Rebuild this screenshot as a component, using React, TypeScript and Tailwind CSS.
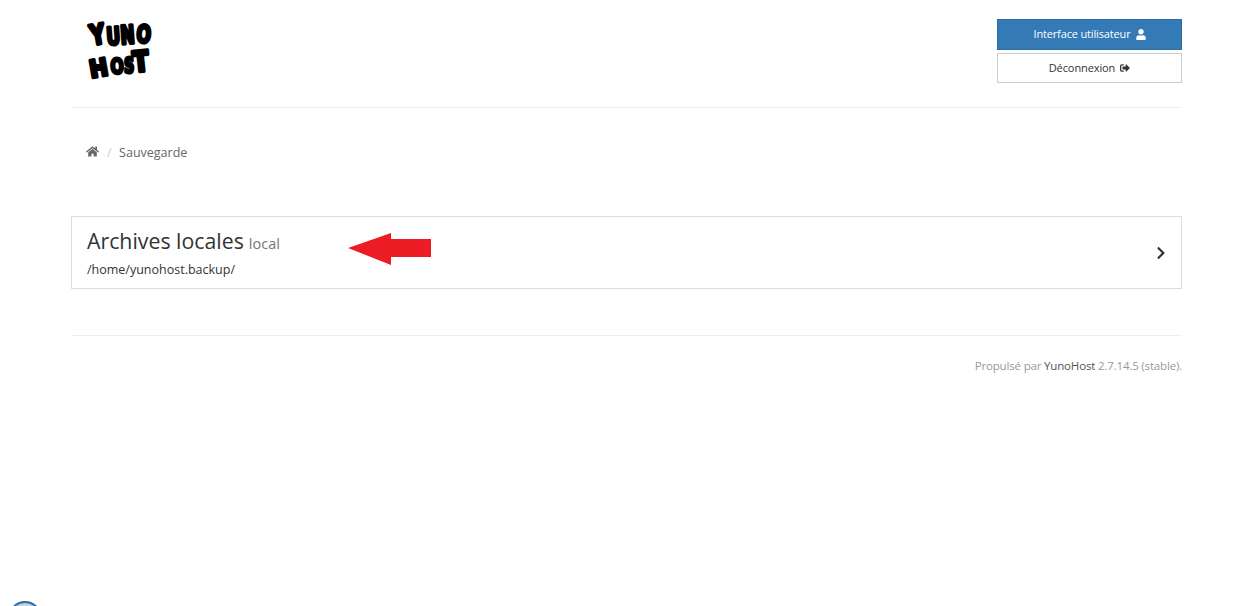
import { FaHome, FaUser, FaSignOutAlt, FaChevronRight } from "react-icons/fa";

const font = { fontFamily: '"Open Sans", sans-serif' };

function Logo() {
  const letters: [string, number, number, number, number, number][] = [
    ["Y", 3, 26, -10, 1.0, 1.35],
    ["U", 18, 26, -4, 0.85, 1.2],
    ["N", 32, 25, -4, 0.85, 1.25],
    ["O", 47, 23, 4, 0.85, 1.2],
    ["H", 2, 59, -10, 1.1, 1.2],
    ["O", 22, 55, -4, 0.78, 1.05],
    ["S", 35, 54, 0, 0.72, 1.05],
    ["T", 45, 53, -6, 1.15, 1.4],
  ];
  return (
    <svg width="70" height="62" viewBox="0 0 70 62" className="block overflow-visible">
      {letters.map(([c, x, y, r, sx, sy], i) => (
        <text
          key={i}
          transform={`translate(${x} ${y}) rotate(${r}) scale(${sx} ${sy})`}
          fontFamily="'DejaVu Sans', sans-serif"
          fontWeight="700"
          fontSize="20"
          fill="#000"
          stroke="#000"
          strokeWidth="2.8"
          strokeLinejoin="round"
        >
          {c}
        </text>
      ))}
    </svg>
  );
}

export default function App() {
  return (
    <div className="min-h-[606px] bg-white relative overflow-hidden text-[13px] text-[#555]" style={font}>
      <div className="w-[1111px] ml-[71px]">
        <header className="flex justify-between h-[108px] border-b border-[#eee]">
          <div className="pl-[18px] pt-[19px]">
            <Logo />
          </div>
          <div className="w-[185px] pt-[19px] flex flex-col gap-[3px]">
            <div className="h-[31px] bg-[#337ab7] border border-[#2e6da4] text-white text-[11px] tracking-[-0.15px] flex items-center justify-center gap-[5px]">
              Interface utilisateur <FaUser className="w-[10px] h-[11px]" />
            </div>
            <div className="h-[30px] bg-white border border-[#ccc] text-[#333] text-[11px] tracking-[-0.1px] flex items-center justify-center gap-[5px]">
              Déconnexion <FaSignOutAlt className="w-[10px] h-[10px]" />
            </div>
          </div>
        </header>
        <nav className="h-[108px] pl-[15px] pt-[36px] flex items-start gap-[8px] text-[12.5px] leading-[17px] text-[#666]">
          <FaHome className="w-[13px] h-[13px] mt-[1px] text-[#666]" />
          <span className="text-[#ccc]">/</span>
          <span className="-ml-[0.5px]">Sauvegarde</span>
        </nav>
        <div className="h-[73px] border border-[#ddd] flex items-center justify-between pl-[15px] pr-[15px]">
          <div>
            <div className="text-[#333] text-[21.3px] leading-[26px] flex items-baseline gap-[5px]">
              Archives locales <span className="text-[14.5px] text-[#777]">local</span>
            </div>
            <div className="text-[#333] text-[12.5px] leading-[17px] mt-[4px]">/home/yunohost.backup/</div>
          </div>
          <FaChevronRight className="w-[10px] h-[14px] text-[#333]" />
        </div>
        <div className="mt-[46px] border-t border-[#eee] pt-[22px] text-right text-[11.5px] tracking-[-0.17px] leading-[16px] text-[#999]">
          Propulsé par <span className="text-[#555]">YunoHost</span> 2.7.14.5 (stable).
        </div>
      </div>
      <svg width="85" height="34" viewBox="0 0 85 34" className="absolute left-[347px] top-[232px]">
        <polygon points="1,16 44,1 44,7 84,7 84,25 44,25 44,33" fill="#ed1c24" />
      </svg>
      <div className="absolute left-[8px] top-[601px] w-[34px] h-[34px] rounded-full border-2 border-[#2f6ea5] bg-[#c5d3df]" />
    </div>
  );
}
